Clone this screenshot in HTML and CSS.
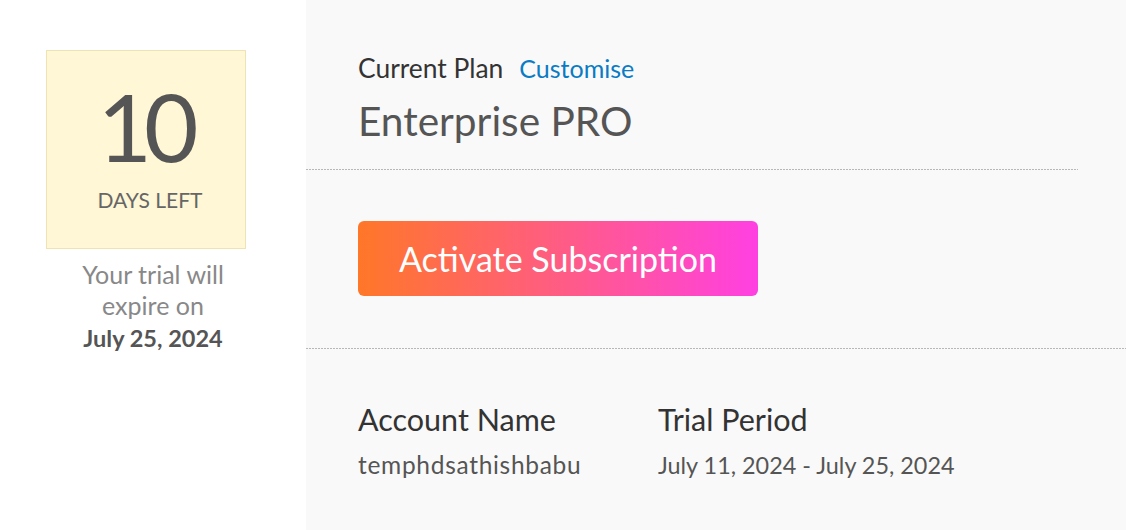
FILE: index.html
```
<!DOCTYPE html>
<html>
<head>
<meta charset="utf-8">
<link rel="stylesheet" href="styles.css">
</head>
<body>
<div class="page">
  <aside class="left">
    <div class="days-box">
      <div class="days-num">10</div>
      <div class="days-label">DAYS LEFT</div>
    </div>
    <div class="expire-wrap">
      <p class="expire">Your trial will<br>expire on</p>
      <p class="expire-date">July 25, 2024</p>
    </div>
  </aside>
  <main class="right">
    <section class="plan">
      <div class="plan-head"><span class="plan-label">Current Plan</span><a class="customise">Customise</a></div>
      <div class="plan-name">Enterprise PRO</div>
    </section>
    <div class="dots dots-short"></div>
    <section class="action">
      <button class="activate">Activate Subscription</button>
    </section>
    <div class="dots"></div>
    <section class="details">
      <div class="detail detail-account">
        <div class="detail-title">Account Name</div>
        <div class="detail-value detail-name">temphdsathishbabu</div>
      </div>
      <div class="detail">
        <div class="detail-title">Trial Period</div>
        <div class="detail-value">July 11, 2024 - July 25, 2024</div>
      </div>
    </section>
  </main>
</div>
</body>
</html>
```
FILE: styles.css
```
html, body {
  margin: 0;
  padding: 0;
  background: #fff;
  font-family: Lato, "Open Sans", sans-serif;
}
.page {
  display: flex;
  width: 1126px;
  height: 530px;
  overflow: hidden;
}
.left {
  width: 306px;
  flex: none;
  background: #fff;
  display: flex;
  flex-direction: column;
  align-items: flex-start;
  padding: 50px 0 0 46px;
  box-sizing: border-box;
}
.days-box {
  width: 200px;
  height: 199px;
  box-sizing: border-box;
  background: #fff7d6;
  border: 1px solid #efe3b4;
  padding-left: 8px;
  display: flex;
  flex-direction: column;
  align-items: center;
}
.days-num {
  font-size: 94px;
  line-height: 95px;
  color: #555;
  margin-top: 27px;
  letter-spacing: -8px;
  padding-right: 12px;
}
.days-label {
  font-size: 21px;
  color: #666;
  margin-top: 14px;
}
.expire-wrap {
  width: 210px;
  padding-left: 2px;
  text-align: center;
  margin-top: 10px;
}
.expire {
  margin: 0;
  font-size: 25px;
  line-height: 31px;
  color: #888;
}
.expire-date {
  margin: 2px 0 0;
  font-size: 23.5px;
  line-height: 31px;
  font-weight: bold;
  color: #555;
}
.right {
  flex: 1;
  background: #f9f9f9;
  display: flex;
  flex-direction: column;
}
.plan {
  flex: none;
  padding: 52px 0 0 52px;
  height: 169px;
  box-sizing: border-box;
}
.plan-head {
  display: flex;
  align-items: baseline;
  gap: 16px;
  font-size: 26.4px;
}
.plan-label { color: #333; }
.customise { color: #0a7bc4; cursor: pointer; font-size: 25px; }
.plan-name {
  font-size: 40.6px;
  color: #555;
  margin-top: 12px;
}
.dots {
  flex: none;
  height: 1px;
  background-image: repeating-linear-gradient(to right, #b8b8b8 0 2px, transparent 2px 3px);
}
.dots-short { width: 772px; }
.action {
  flex: none;
  padding: 51px 0 0 52px;
  height: 178px;
  box-sizing: border-box;
}
.activate {
  display: block;
  width: 400px;
  height: 75px;
  border: none;
  border-radius: 6px;
  background: linear-gradient(to right, #ff7728, #ff5f7a 45%, #ff40e2);
  color: #fff;
  font-family: inherit;
  font-size: 34px;
  padding: 0;
}
.details {
  display: flex;
  padding: 52px 0 0 52px;
}
.detail-account { width: 300px; }
.detail-title {
  font-size: 30.5px;
  color: #333;
}
.detail-value {
  font-size: 23.4px;
  color: #555;
  margin-top: 14px;
}
.detail-name { font-size: 24.5px; letter-spacing: 0.7px; margin-top: 13px; }
```
